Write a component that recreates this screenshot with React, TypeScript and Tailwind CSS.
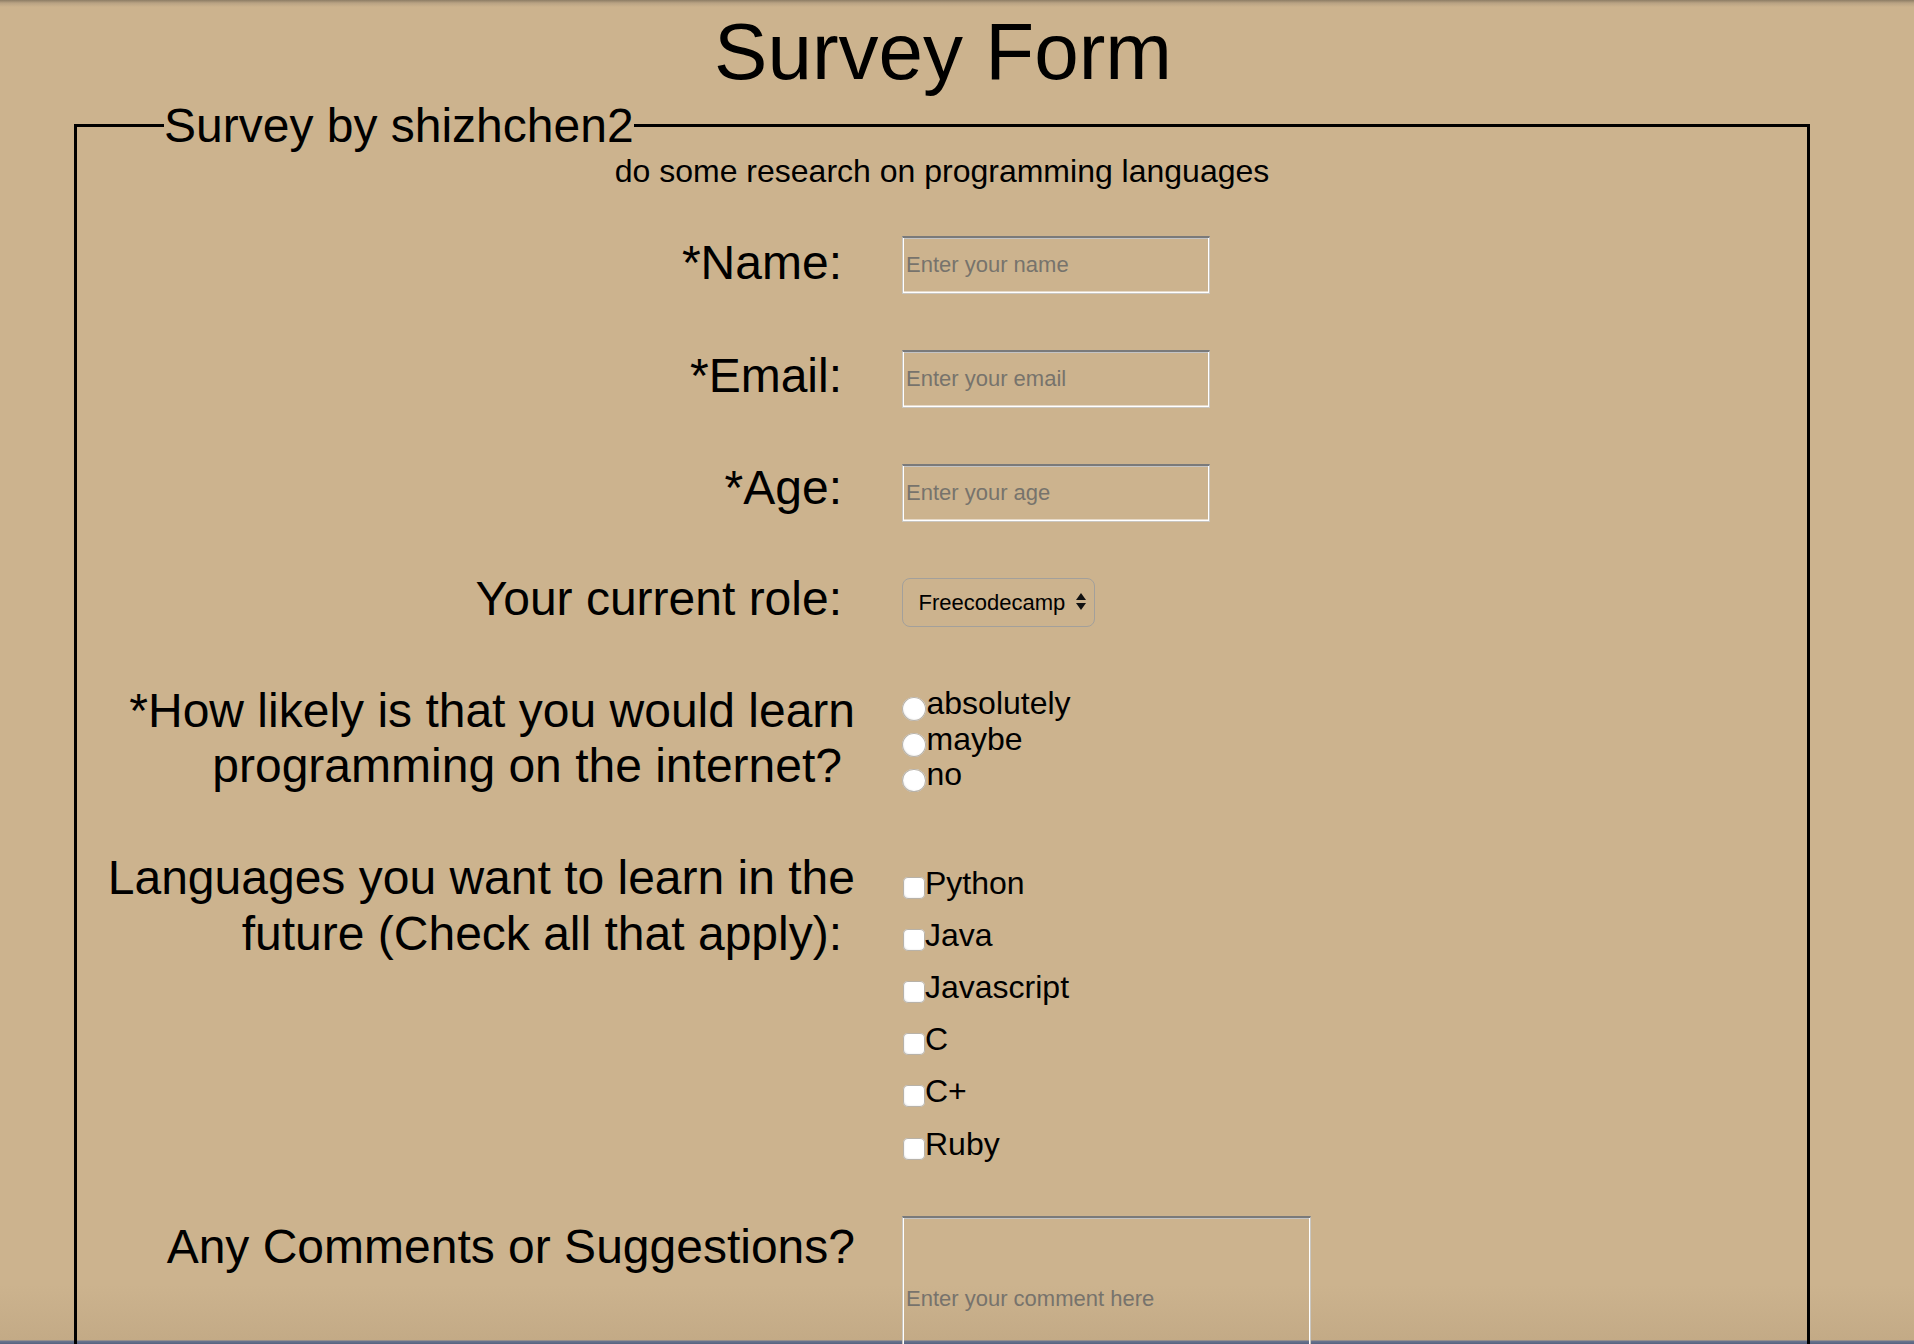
import React from "react";

const inputCls =
  "block bg-transparent outline-none text-[22px] pl-[3px] border border-[#c9c6c0] border-t-2 border-t-[#7a7a7a] shadow-[inset_1px_0_0_#ffffff,inset_-1px_0_0_#ffffff,inset_0_-1.5px_0_#ffffff,inset_0_1px_0_#c4c4c4] placeholder:text-[#77736c]";

const labelCls = "w-[778px] shrink-0 text-right text-[48px] leading-[55.15px]";

function Radio({ label }: { label: string }) {
  return (
    <div className="flex items-start">
      <span className="mt-[11.5px] h-[23.5px] w-[23.5px] shrink-0 rounded-full bg-white shadow-[inset_0_0_0_1px_#b8b2a8,inset_1px_-1px_2px_rgba(0,0,0,0.14)]" />
      <span className="ml-[1px]">{label}</span>
    </div>
  );
}

function Check({ label }: { label: string }) {
  return (
    <div className="flex items-start">
      <span className="ml-[1px] mt-[11px] h-[22px] w-[22px] shrink-0 rounded-[5px] bg-white shadow-[inset_0_0_0_1px_#b8b2a8,inset_1px_-1px_2px_rgba(0,0,0,0.14)]" />
      <span>{label}</span>
    </div>
  );
}

export default function App() {
  return (
    <div className="h-[1344px] w-[1914px] overflow-hidden bg-[linear-gradient(180deg,#8c7c64_0px,#b8a283_3px,#ccb38e_7px,#ccb38e_1285px,#c3aa86_1340px,#6b7590_1341px,#56637f_1344px)] font-['Liberation_Sans',Arial,sans-serif] text-black">
      <div className="w-[1886px]">
        <h1 className="mt-[6px] text-center text-[80px] leading-[92px] font-normal">
          Survey Form
        </h1>
        <fieldset className="ml-[74px] w-[1736px] border-[3px] border-black">
          <legend className="ml-[87px] text-[48px] leading-[55px]">
            Survey by shizhchen2
          </legend>
          <p className="text-center text-[32px] leading-[36.8px]">
            do some research on programming languages
          </p>

          {/* Name */}
          <div className="mt-[45.2px] flex items-start">
            <div className={labelCls}>
              <div className="pr-[13px]">*Name:</div>
            </div>
            <input
              className={`ml-[47px] mt-[1px] h-[58px] w-[308px] ${inputCls}`}
              placeholder="Enter your name"
            />
          </div>

          {/* Email */}
          <div className="mt-[54px] flex items-start">
            <div className={labelCls}>
              <div className="pr-[13px]">*Email:</div>
            </div>
            <input
              className={`ml-[47px] mt-[2px] h-[58px] w-[308px] ${inputCls}`}
              placeholder="Enter your email"
            />
          </div>

          {/* Age */}
          <div className="mt-[52px] flex items-start">
            <div className={labelCls}>
              <div className="pr-[13px]">*Age:</div>
            </div>
            <input
              className={`ml-[47px] mt-[4px] h-[58px] w-[308px] ${inputCls}`}
              placeholder="Enter your age"
            />
          </div>

          {/* Role */}
          <div className="mt-[49.5px] flex items-start">
            <div className={labelCls}>
              <div className="pr-[13px]">Your current role:</div>
            </div>
            <div className="ml-[47px] mt-[6.8px] flex h-[48.4px] w-[193px] items-center rounded-[8px] border-[1.5px] border-[#a3a09b] pl-[15.5px] text-[22px]">
              <span>Freecodecamp</span>
              <svg
                className="ml-auto mr-[8px]"
                width="10"
                height="18"
                viewBox="0 0 10 18"
              >
                <polygon points="5,0 10,7 0,7" fill="#111" />
                <polygon points="0,10 10,10 5,17" fill="#111" />
              </svg>
            </div>
          </div>

          {/* Radio */}
          <div className="mt-[56.5px] flex items-start">
            <div className={labelCls}>
              <div>*How likely is that you would learn</div>
              <div className="pr-[13px]">programming on the internet?</div>
            </div>
            <div className="ml-[47px] mt-[2.5px] text-[32px] leading-[35.85px]">
              <Radio label="absolutely" />
              <Radio label="maybe" />
              <Radio label="no" />
            </div>
          </div>

          {/* Languages */}
          <div className="mt-[57px] flex items-start">
            <div className={labelCls}>
              <div>Languages you want to learn in the</div>
              <div className="pr-[13px]">future (Check all that apply):</div>
            </div>
            <div className="ml-[47px] mt-[15.2px] flex flex-col gap-[16.35px] text-[32px] leading-[35.85px]">
              <Check label="Python" />
              <Check label="Java" />
              <Check label="Javascript" />
              <Check label="C" />
              <Check label="C+" />
              <Check label="Ruby" />
            </div>
          </div>

          {/* Comments */}
          <div className="mt-[53.15px] flex items-start">
            <div className={`mt-[3.1px] ${labelCls}`}>
              <div>Any Comments or Suggestions?</div>
            </div>
            <input
              className={`ml-[47px] h-[166px] w-[409px] ${inputCls}`}
              placeholder="Enter your comment here"
            />
          </div>
          <div className="h-[200px]" />
        </fieldset>
      </div>
    </div>
  );
}
